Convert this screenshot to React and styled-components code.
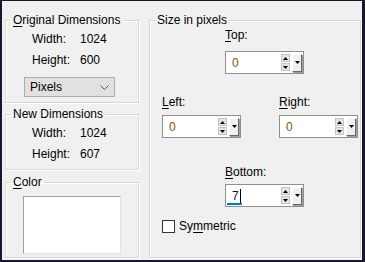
import React from 'react';
import styled, { createGlobalStyle } from 'styled-components';

const GlobalStyle = createGlobalStyle`
  html, body {
    margin: 0;
    padding: 0;
    background: #1b1530;
  }
  body {
    font-family: "Liberation Sans", Arial, sans-serif;
    font-size: 12px;
    color: #000;
  }
`;

const Frame = styled.div`
  width: 365px;
  height: 262px;
  box-sizing: border-box;
  padding: 1px 3px 2px 2px;
  background: #1b1530;
`;

const Panel = styled.div`
  height: 100%;
  background: #f0f0f0;
  display: flex;
  gap: 10px;
  padding: 12px 0 0 3px;
  box-sizing: border-box;
`;

const Column = styled.div`
  width: 134px;
  display: flex;
  flex-direction: column;
`;

const Group = styled.fieldset`
  margin: ${({ $top }) => $top || 0}px 0 0 0;
  padding: 0;
  min-width: 0;
  width: ${({ $width }) => $width}px;
  height: ${({ $height }) => $height}px;
  box-sizing: border-box;
  border: 1px solid #d8d8d8;
  box-shadow: inset 1px 1px 0 #fff, 1px 1px 0 #fff;
  display: flex;
  flex-direction: column;
`;

const Caption = styled.legend`
  margin-left: 5px;
  padding: 0 2px;
  line-height: 15px;
  height: 15px;
`;

const Key = styled.span`
  text-decoration: underline;
  text-underline-offset: 2px;
`;

const InfoRow = styled.div`
  display: flex;
  height: 21px;
  align-items: center;
  padding-left: 26px;
`;

const InfoLabel = styled.span`
  width: 48px;
`;

const Combo = styled.div`
  margin: 7px 0 0 18px;
  width: 91px;
  height: 20px;
  box-sizing: border-box;
  border: 1px solid #adadad;
  background: #e1e1e1;
  display: flex;
  align-items: center;
  justify-content: space-between;
  padding: 0 5px;
`;

const Swatch = styled.div`
  margin: 6px 0 0 17px;
  width: 98px;
  height: 58px;
  box-sizing: border-box;
  background: #fff;
  border-top: 1px solid #a0a0a0;
  border-left: 1px solid #a0a0a0;
  border-right: 1px solid #e3e3e3;
  border-bottom: 1px solid #e3e3e3;
`;

const SizeBody = styled.div`
  display: flex;
  flex-direction: column;
  padding: 0 2px 0 12px;
`;

const Field = styled.div`
  display: flex;
  flex-direction: column;
  width: 79px;
  margin: ${({ $top }) => $top || 0}px 0 0 ${({ $indent }) => $indent || 0}px;
`;

const FieldLabel = styled.div`
  height: 15px;
  line-height: 15px;
  margin-bottom: ${({ $gap }) => $gap}px;
`;

const SideRow = styled.div`
  display: flex;
  justify-content: space-between;
`;

const Spin = styled.div`
  height: 23px;
  box-sizing: border-box;
  border: 1px solid #8f8f8f;
  background: #fff;
  display: flex;
  align-items: center;
  padding-right: 1px;
`;

const SpinText = styled.div`
  position: relative;
  flex: 1;
  height: 100%;
  display: flex;
  align-items: center;
  padding-left: 6px;
  color: ${({ $active }) => ($active ? '#10104a' : '#8c4f06')};
`;

const Caret = styled.span`
  display: inline-block;
  width: 1px;
  height: 14px;
  background: #000;
  margin-left: 1px;
`;

const Underbar = styled.div`
  position: absolute;
  left: 1px;
  bottom: 1px;
  width: 15px;
  height: 2px;
  background: #0078d7;
`;

const Arrows = styled.div`
  display: flex;
  flex-direction: column;
  gap: 1px;
  margin-right: 2px;
`;

const ArrowBtn = styled.div`
  width: 9px;
  height: 8px;
  box-sizing: border-box;
  background: #e4e4e4;
  border: 1px solid #c4c4c4;
  display: flex;
  align-items: center;
  justify-content: center;
`;

const DropBtn = styled.div`
  width: 10px;
  height: 18px;
  box-sizing: border-box;
  background: #f0f0f0;
  border-top: 1px solid #fff;
  border-left: 1px solid #fff;
  border-right: 1px solid #696969;
  border-bottom: 1px solid #696969;
  box-shadow: 1px 1px 0 #a0a0a0;
  display: flex;
  align-items: center;
  justify-content: center;
`;

const CheckRow = styled.div`
  display: flex;
  align-items: center;
  gap: 4px;
  margin-top: 11px;
  height: 16px;
`;

const Box = styled.div`
  width: 13px;
  height: 13px;
  box-sizing: border-box;
  border: 1px solid #333;
  background: #fff;
`;

const Tri = ({ down }) => (
  <svg width="5" height="3" viewBox="0 0 5 3">
    <path d={down ? 'M0 0h5L2.5 3z' : 'M0 3h5L2.5 0z'} fill="#000" />
  </svg>
);

const SpinBox = ({ value, active }) => (
  <Spin>
    <SpinText $active={active}>
      {value}
      {active && <Caret />}
      {active && <Underbar />}
    </SpinText>
    <Arrows>
      <ArrowBtn>
        <Tri />
      </ArrowBtn>
      <ArrowBtn>
        <Tri down />
      </ArrowBtn>
    </Arrows>
    <DropBtn>
      <Tri down />
    </DropBtn>
  </Spin>
);

const App = () => (
  <>
    <GlobalStyle />
    <Frame>
      <Panel>
        <Column>
          <Group $width={134} $height={90}>
            <Caption>
              <Key>O</Key>riginal Dimensions
            </Caption>
            <InfoRow>
              <InfoLabel>Width:</InfoLabel>1024
            </InfoRow>
            <InfoRow>
              <InfoLabel>Height:</InfoLabel>600
            </InfoRow>
            <Combo>
              Pixels
              <svg width="9" height="5" viewBox="0 0 9 5">
                <path d="M0.5 0.5L4.5 4.5L8.5 0.5" fill="none" stroke="#555" />
              </svg>
            </Combo>
          </Group>
          <Group $width={134} $height={63} $top={4}>
            <Caption>New Dimensions</Caption>
            <InfoRow>
              <InfoLabel>Width:</InfoLabel>1024
            </InfoRow>
            <InfoRow>
              <InfoLabel>Height:</InfoLabel>607
            </InfoRow>
          </Group>
          <Group $width={134} $height={83} $top={5}>
            <Caption>
              <Key>C</Key>olor
            </Caption>
            <Swatch />
          </Group>
        </Column>
        <Group $width={212} $height={245}>
          <Caption>Size in pixels</Caption>
          <SizeBody>
            <Field $indent={63}>
              <FieldLabel $gap={8}>
                <Key>T</Key>op:
              </FieldLabel>
              <SpinBox value="0" />
            </Field>
            <SideRow>
              <Field $top={21}>
                <FieldLabel $gap={5}>
                  <Key>L</Key>eft:
                </FieldLabel>
                <SpinBox value="0" />
              </Field>
              <Field $top={21}>
                <FieldLabel $gap={5}>
                  <Key>R</Key>ight:
                </FieldLabel>
                <SpinBox value="0" />
              </Field>
            </SideRow>
            <Field $indent={63} $top={27}>
              <FieldLabel $gap={4}>
                <Key>B</Key>ottom:
              </FieldLabel>
              <SpinBox value="7" active />
            </Field>
            <CheckRow>
              <Box />
              <span>
                Sy<Key>m</Key>metric
              </span>
            </CheckRow>
          </SizeBody>
        </Group>
      </Panel>
    </Frame>
  </>
);

export default App;
